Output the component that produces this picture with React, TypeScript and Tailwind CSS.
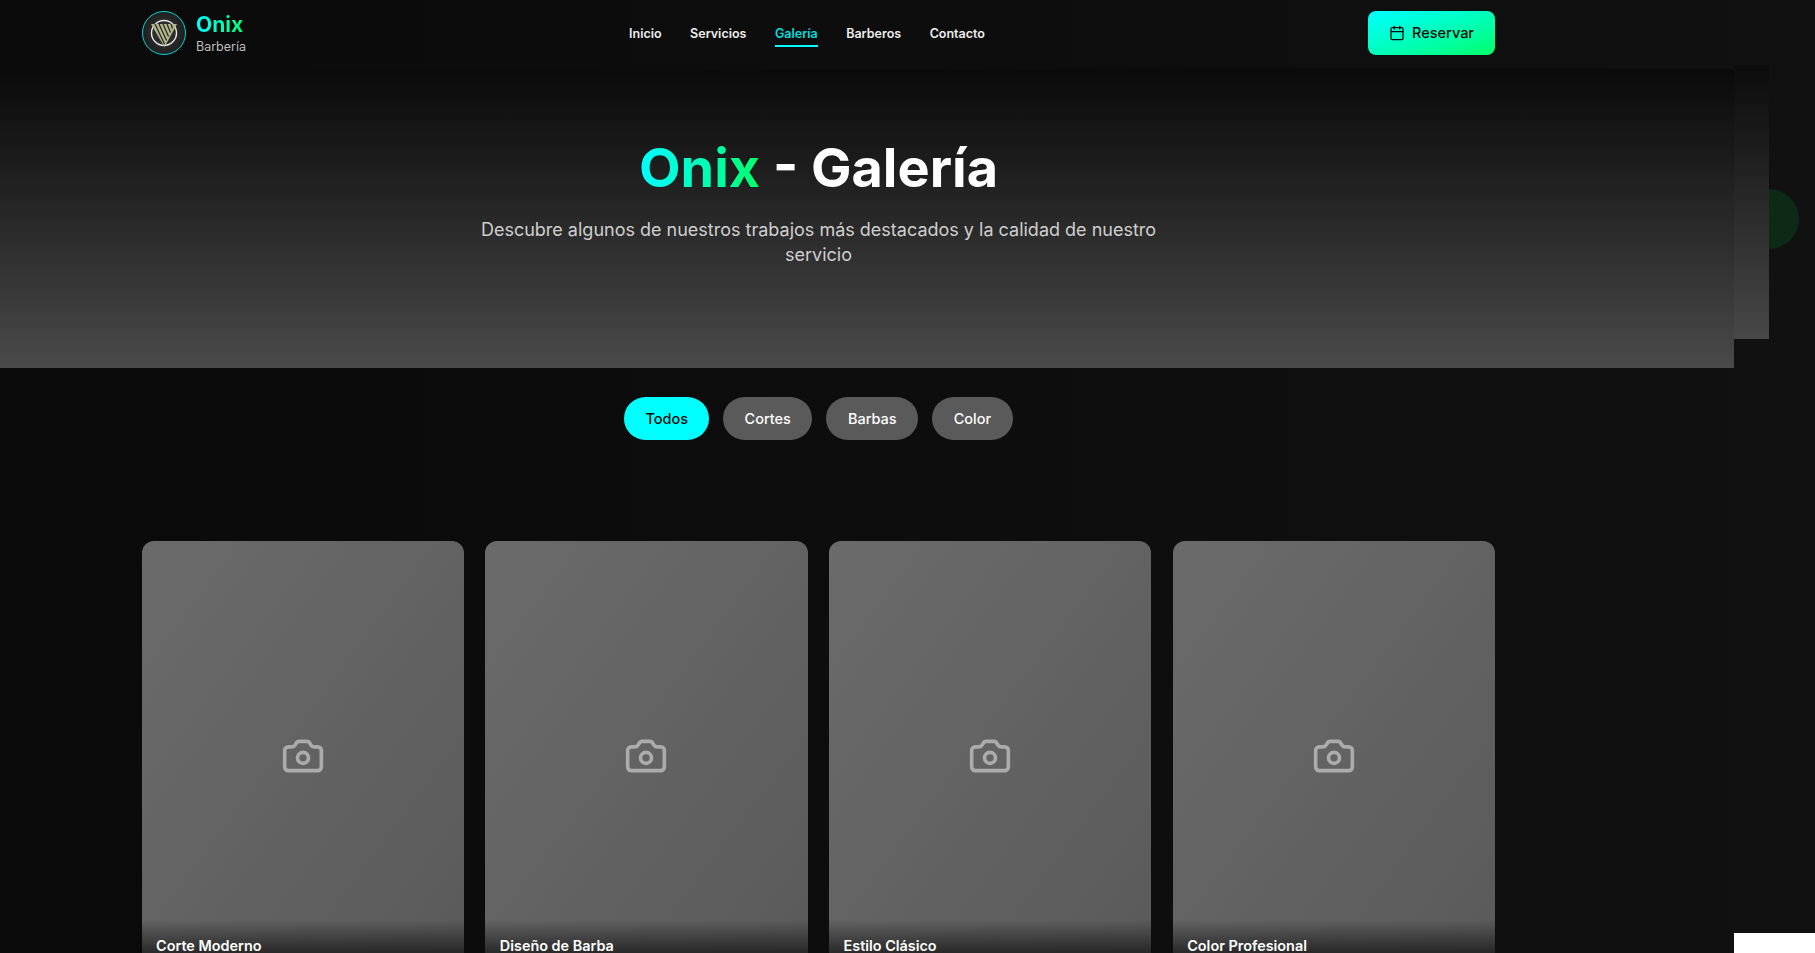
import { Calendar, Camera } from 'lucide-react';

const navItems = ['Inicio', 'Servicios', 'Galería', 'Barberos', 'Contacto'];
const filters = ['Todos', 'Cortes', 'Barbas', 'Color'];
const photos = ['Corte Moderno', 'Diseño de Barba', 'Estilo Clásico', 'Color Profesional'];

const Logo = () => (
  <div className="flex h-[43.5px] w-[43.5px] items-center justify-center rounded-full border border-[#00d8d8] bg-[radial-gradient(circle,#3a3a3a_0%,#141414_100%)]">
    <svg width="34" height="34" viewBox="0 0 34 34" fill="none">
      <circle cx="17" cy="17" r="12.5" stroke="#e6e6e6" strokeWidth="1.4" />
      <path d="M4 8H30L17.5 31Z" fill="#b3b78a" />
      <path d="M8 8L17.5 28M12 8L19.5 24.5M16 8L21.5 20.5M20 8L23.5 16.5M24 8L25.5 12.5" stroke="#2a2a2a" strokeWidth="1.3" />
    </svg>
  </div>
);

export default function App() {
  return (
    <div className="relative h-[953px] w-full overflow-hidden bg-white font-['Inter',sans-serif]">
      {/* restos que se salen por la derecha de la página */}
      <div className="absolute inset-x-0 top-0 h-[933px] bg-[#111111]" />
      <div className="absolute left-[1739px] top-[189px] h-[60px] w-[60px] rounded-full bg-[#0d2a17]" />
      <div className="absolute left-[1734px] top-[65px] h-[274px] w-[35px] bg-gradient-to-b from-[#0c0c0c] to-[#484848]" />

      <div className="relative h-[953px] w-[1734px] bg-gradient-to-r from-[#0a0a0a] to-[#101010]">
        <header className="h-[69px] pl-[142px] pr-[239px] pt-[11px]">
          <div className="flex h-11 items-center justify-between">
            <div className="flex items-center gap-[10.5px]">
              <Logo />
              <div className="pt-0.5">
                <div className="bg-gradient-to-r from-[#00ffff] to-[#00ff66] bg-clip-text text-[21px] font-bold leading-[26px] text-transparent">
                  Onix
                </div>
                <div className="text-[12.5px] leading-[18px] text-[#bdbdbd]">Barbería</div>
              </div>
            </div>

            <nav className="flex items-center gap-[28.5px]">
              {navItems.map((item) => (
                <a
                  key={item}
                  className={
                    item === 'Galería'
                      ? 'border-b-2 border-[#00ffff] pb-[3px] pt-1.5 text-[12.5px] font-semibold leading-4 text-[#00dede]'
                      : 'border-b-2 border-transparent pb-[3px] pt-1.5 text-[12.5px] font-semibold leading-4 text-[#ececec]'
                  }
                >
                  {item}
                </a>
              ))}
            </nav>

            <button className="flex h-11 w-[127px] items-center justify-center gap-[7px] rounded-lg bg-gradient-to-br from-[#00ffff] to-[#00ff66] text-[14.5px] font-medium text-[#0a0a0a]">
              <Calendar className="h-4 w-4" />
              Reservar
            </button>
          </div>
        </header>

        <section className="h-[299px] bg-gradient-to-b from-[#0a0a0a] to-[#4a4a4a] pr-[97px] pt-[67px] text-center">
          <h1 className="text-[54px] font-bold leading-[64px] text-white">
            <span className="bg-gradient-to-r from-[#00ffff] to-[#00ff66] bg-clip-text text-transparent">Onix</span> - Galería
          </h1>
          <p className="mx-auto mt-[17px] w-[700px] text-[18px] leading-[25px] text-[#cfcfcf]">
            Descubre algunos de nuestros trabajos más destacados y la calidad de nuestro servicio
          </p>
        </section>

        <div className="flex justify-center gap-3.5 pr-[97px] pt-[29px]">
          {filters.map((filter) => (
            <button
              key={filter}
              className={
                filter === 'Todos'
                  ? 'h-[43px] rounded-full bg-[#00ffff] px-[21px] text-[14.5px] font-medium text-[#0a0a0a]'
                  : 'h-[43px] rounded-full bg-[#5a5a5a] px-[21.5px] text-[14.5px] font-medium text-white'
              }
            >
              {filter}
            </button>
          ))}
        </div>

        <div className="ml-[141.6px] mt-[101px] grid w-[1353.4px] grid-cols-4 gap-[21.5px]">
          {photos.map((photo) => (
            <div
              key={photo}
              className="relative flex aspect-[3/4] items-center justify-center overflow-hidden rounded-xl bg-gradient-to-br from-[#6b6b6b] to-[#5a5a5a]"
            >
              <Camera className="h-11 w-11 text-[#ababab]" />
              <div className="absolute inset-x-0 bottom-0 bg-gradient-to-t from-[#0a0a0a] to-transparent px-[14.5px] py-[15px]">
                <h3 className="text-[14.4px] font-semibold leading-[21px] text-white">{photo}</h3>
              </div>
            </div>
          ))}
        </div>
      </div>
    </div>
  );
}
